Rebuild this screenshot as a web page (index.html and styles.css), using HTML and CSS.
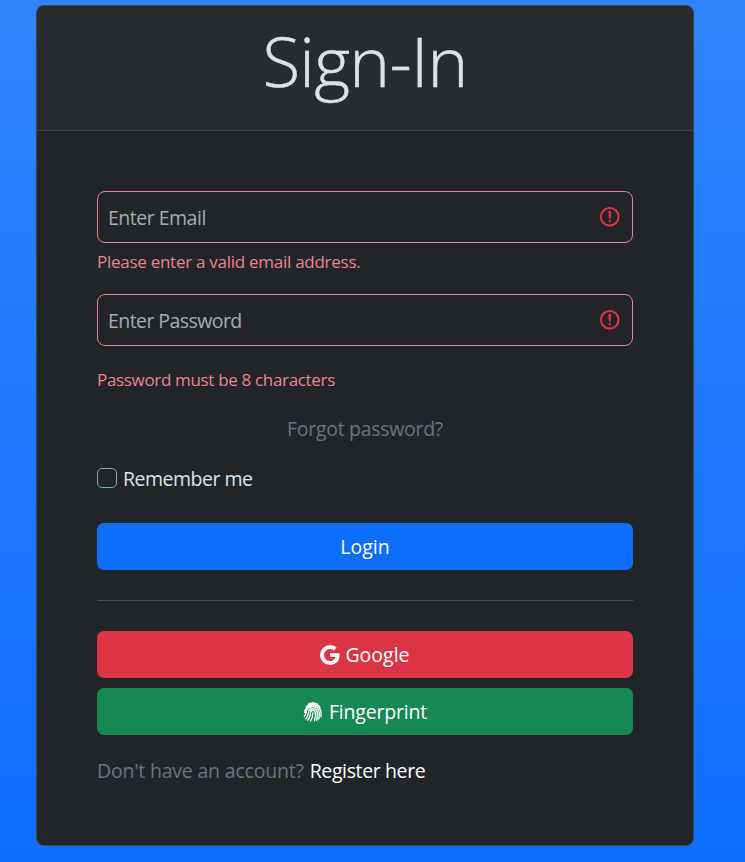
FILE: index.html
```html
<!DOCTYPE html>
<html lang="en">
<head>
<meta charset="utf-8">
<title>Sign-In</title>
<link rel="stylesheet" href="styles.css">
</head>
<body>
<main class="card">
  <header class="card-header"><h1 class="title">Sign-In</h1></header>
  <form class="card-body">
    <div class="field">
      <span class="placeholder email">Enter Email</span>
      <svg class="alert" viewBox="0 0 12 12" fill="none" stroke="#dc3545"><circle cx="6" cy="6" r="4.5"/><path stroke-linejoin="round" d="M5.8 3.6h.4L6 6.5z"/><circle cx="6" cy="8.2" r=".6" fill="#dc3545" stroke="none"/></svg>
    </div>
    <p class="feedback email-error"><span>Please enter a valid email address.</span></p>
    <div class="field">
      <span class="placeholder pass">Enter Password</span>
      <svg class="alert" viewBox="0 0 12 12" fill="none" stroke="#dc3545"><circle cx="6" cy="6" r="4.5"/><path stroke-linejoin="round" d="M5.8 3.6h.4L6 6.5z"/><circle cx="6" cy="8.2" r=".6" fill="#dc3545" stroke="none"/></svg>
    </div>
    <p class="feedback pass-error"><span>Password must be 8 characters</span></p>
    <a class="forgot"><span>Forgot password?</span></a>
    <label class="remember"><span class="box"></span><span class="remember-text">Remember me</span></label>
    <button type="button" class="btn login"><span>Login</span></button>
    <hr class="rule">
    <button type="button" class="btn google">
      <svg class="icon" viewBox="0 0 16 16" fill="currentColor"><path d="M15.545 6.558a9.42 9.42 0 0 1 .139 1.626c0 2.434-.87 4.492-2.384 5.885h.002C11.978 15.292 10.158 16 8 16A8 8 0 1 1 8 0a7.689 7.689 0 0 1 5.352 2.082l-2.284 2.284A4.347 4.347 0 0 0 8 3.166c-2.087 0-3.86 1.408-4.492 3.304a4.792 4.792 0 0 0 0 3.063h.003c.635 1.893 2.405 3.301 4.492 3.301 1.078 0 2.004-.276 2.722-.764h-.003a3.702 3.702 0 0 0 1.599-2.431H8v-3.08h7.545z"/></svg>
      <span>Google</span>
    </button>
    <button type="button" class="btn fingerprint">
      <svg class="icon" viewBox="0 0 20 20" fill="none" stroke="currentColor" stroke-width="1.35" stroke-linecap="round"><path d="M5.500 2Q10-.3 14.500 2M3 5.200C6 1.200 14 1.200 17 5.200M1.700 10.500C2 3.200 14.500.5 17.600 8.200q.8 3 .3 6.500M1.200 14.500c1.800-1.200 1.700-3 2-4.600C4.300 3.500 14.500 2.700 16 9.500q.5 3.500-.2 7.500M2.800 16.700c2.600-2 2.100-4.500 2.500-6.100C6 5.500 13.300 5.500 14.100 10q.5 4-.5 8.400M4.800 18.200c2.500-2.300 2.300-5 2.500-7.400.4-3.400 4.600-3.400 5 0 .2 3-.1 5.500-.9 8.200M7.500 19.200c2-2.700 2.300-5.500 2.300-8.400"/></svg>
      <span>Fingerprint</span>
    </button>
    <p class="register"><span class="muted">Don't have an account?</span><a>Register here</a></p>
  </form>
</main>
</body>
</html>
```
FILE: styles.css
```css
* { box-sizing: border-box; }
body {
  margin: 0;
  height: 862px;
  padding: 5px 51px 0 36px;
  overflow: hidden;
  background: linear-gradient(180deg, rgba(255,255,255,.15), rgba(255,255,255,0)) #0d6efd;
  color: #dee2e6;
  font: 19.5px/30px "Open Sans", sans-serif;
}
.card { height: 841px; border: 1px solid #424549; border-radius: 8px; background: #212529; overflow: hidden; }
.card-header { height: 125px; border-bottom: 1px solid #424549; background: #282b2f; display: flex; justify-content: center; }
.title { margin: 0; padding-top: 7px; font-size: 69px; line-height: 94px; font-weight: 300; letter-spacing: -.7px; -webkit-text-stroke: .5px #dee2e6; }
.card-body { padding: 60px; display: flex; flex-direction: column; }
.field { height: 52px; flex: none; display: flex; align-items: center; justify-content: space-between; padding: 0 11px 0 10px; border: 1px solid #ea868f; border-radius: 8px; color: #a7acb1; }
.placeholder { padding-top: 2px; }
.email { letter-spacing: -.5px; }
.pass { letter-spacing: -.57px; }
.alert { width: 23.500px; height: 23.500px; }
.feedback { margin: 0; color: #ea868f; font-size: 17px; line-height: 26px; letter-spacing: -.27px; }
.email-error { padding: 6px 0 0; height: 51px; }
.pass-error { padding-top: 21px; height: 68px; letter-spacing: -.33px; }
.forgot { height: 30px; color: #6c757d; text-align: center; letter-spacing: -.3px; }
.remember { display: flex; align-items: center; gap: 6px; height: 30px; margin-top: 20px; letter-spacing: -.5px; }
.box { width: 20px; height: 20px; margin-bottom: 2px; border: 1px solid #75b798; border-radius: 5px; }
.btn { width: 100%; height: 47px; border: 0; border-radius: 7px; color: #fff; font: inherit; padding: 0; display: flex; justify-content: center; align-items: center; gap: 6px; }
.login { margin-top: 29px; background: #0d6efd; }
.rule { width: 100%; height: 1px; margin: 30px 0; border: 0; background: #505357; }
.google { background: #dc3545; gap: 5px; }
.fingerprint { margin-top: 10px; background: #198754; letter-spacing: -.2px; }
.icon { width: 20px; height: 20px; }
.register { margin: 21px 0 0; display: flex; gap: 6px; letter-spacing: -.2px; }
.register a { color: #fff; letter-spacing: -.38px; }
.muted { color: #6c757d; }
```
